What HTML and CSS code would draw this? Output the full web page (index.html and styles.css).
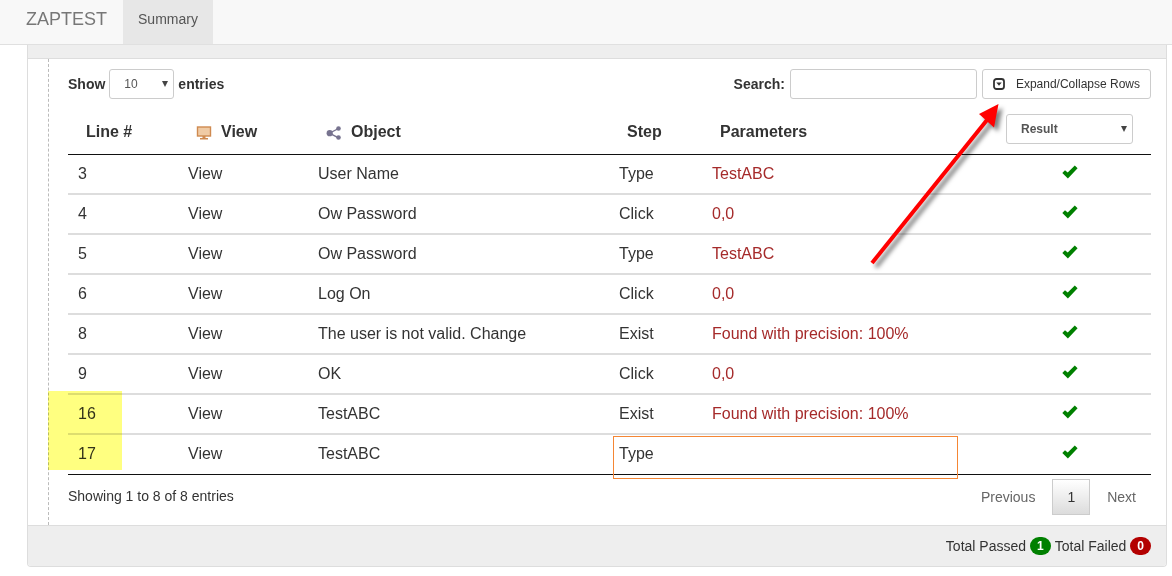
FILE: index.html
```html
<!DOCTYPE html>
<html lang="en">

<head>
    <meta charset="UTF-8">
    <meta name="viewport" content="width=device-width, initial-scale=1.0">
    <title>ZAPTEST</title>
    <link rel="stylesheet" href="styles.css">
</head>

<body>

    <!-- Icons -->
    <svg class="icon-defs" width="0" height="0">
        <symbol id="icon-check" viewBox="0 0 16 14">
            <path d="M0.3 8 L3 5.2 L5.7 7.6 L12.8 0.6 L15.6 3.3 L5.9 13.4 Z" fill="#008000" />
        </symbol>
    </svg>

    <!-- Navbar -->
    <nav class="navbar">
        <a class="brand" href="#">ZAPTEST</a>
        <a class="nav-link active" href="#">Summary</a>
    </nav>

    <div class="panel">
        <div class="panel-heading"></div>
        <div class="panel-body">
            <div class="steps">

                <div class="toolbar">
                    <div class="toolbar-group length-group">
                        <label for="pageLength">Show</label>
                        <span class="select-box length-box">
                            <select id="pageLength">
                                <option>10</option>
                                <option>25</option>
                                <option>50</option>
                            </select>
                        </span>
                        <label for="pageLength">entries</label>
                    </div>
                    <div class="toolbar-group">
                        <label for="search">Search:</label>
                        <input type="text" id="search" class="search">
                        <button type="button" class="btn">
                            <svg width="12" height="12" viewBox="0 0 12 12">
                                <rect x="1" y="1" width="10" height="10" rx="2.5" fill="none" stroke="#333" stroke-width="1.8" />
                                <path d="M3.3 4.5 H8.7 L6 7.8 Z" fill="#333" />
                            </svg>
                            Expand/Collapse Rows
                        </button>
                    </div>
                </div>

                <div class="table-wrap">
                    <table>
                        <colgroup>
                            <col class="col-line">
                            <col class="col-view">
                            <col class="col-object">
                            <col class="col-step">
                            <col class="col-params">
                            <col class="col-result">
                        </colgroup>
                        <thead>
                            <tr>
                                <th>Line #</th>
                                <th>
                                    <span class="th-label">
                                        <svg width="16" height="16" viewBox="0 0 16 16">
                                            <rect x="1.5" y="3" width="13" height="9" fill="#f0cba5" stroke="#cf8a50" stroke-width="1.4" />
                                            <path d="M6.5 12 H9.5 V14 H12 V15.4 H4 V14 H6.5 Z" fill="#cf8a50" />
                                        </svg>
                                        View
                                    </span>
                                </th>
                                <th>
                                    <span class="th-label">
                                        <svg width="16" height="16" viewBox="0 0 16 16">
                                            <path d="M12.500 4.500 L3.500 9.200 L12.500 13.800" fill="none" stroke="#77738f" stroke-width="1.4" />
                                            <circle cx="3.700" cy="9.200" r="3.100" fill="#77738f" />
                                            <circle cx="12.500" cy="4.500" r="2.300" fill="#77738f" />
                                            <circle cx="12.500" cy="13.500" r="2.300" fill="#77738f" />
                                        </svg>
                                        Object
                                    </span>
                                </th>
                                <th>Step</th>
                                <th>Parameters</th>
                                <th>
                                    <span class="select-box">
                                        <select id="result" aria-label="Result">
                                            <option>Result</option>
                                            <option>Passed</option>
                                            <option>Failed</option>
                                        </select>
                                    </span>
                                </th>
                            </tr>
                        </thead>
                        <tbody>
                            <tr>
                                <td>3</td>
                                <td>View</td>
                                <td>User Name</td>
                                <td>Type</td>
                                <td class="param">TestABC</td>
                                <td class="result"><svg width="16" height="14"><use href="#icon-check" /></svg></td>
                            </tr>
                            <tr>
                                <td>4</td>
                                <td>View</td>
                                <td>Ow Password</td>
                                <td>Click</td>
                                <td class="param">0,0</td>
                                <td class="result"><svg width="16" height="14"><use href="#icon-check" /></svg></td>
                            </tr>
                            <tr>
                                <td>5</td>
                                <td>View</td>
                                <td>Ow Password</td>
                                <td>Type</td>
                                <td class="param">TestABC</td>
                                <td class="result"><svg width="16" height="14"><use href="#icon-check" /></svg></td>
                            </tr>
                            <tr>
                                <td>6</td>
                                <td>View</td>
                                <td>Log On</td>
                                <td>Click</td>
                                <td class="param">0,0</td>
                                <td class="result"><svg width="16" height="14"><use href="#icon-check" /></svg></td>
                            </tr>
                            <tr>
                                <td>8</td>
                                <td>View</td>
                                <td>The user is not valid. Change</td>
                                <td>Exist</td>
                                <td class="param">Found with precision: 100%</td>
                                <td class="result"><svg width="16" height="14"><use href="#icon-check" /></svg></td>
                            </tr>
                            <tr>
                                <td>9</td>
                                <td>View</td>
                                <td>OK</td>
                                <td>Click</td>
                                <td class="param">0,0</td>
                                <td class="result"><svg width="16" height="14"><use href="#icon-check" /></svg></td>
                            </tr>
                            <tr>
                                <td>16</td>
                                <td>View</td>
                                <td>TestABC</td>
                                <td>Exist</td>
                                <td class="param">Found with precision: 100%</td>
                                <td class="result"><svg width="16" height="14"><use href="#icon-check" /></svg></td>
                            </tr>
                            <tr>
                                <td>17</td>
                                <td>View</td>
                                <td>TestABC</td>
                                <td>Type</td>
                                <td class="param"></td>
                                <td class="result"><svg width="16" height="14"><use href="#icon-check" /></svg></td>
                            </tr>
                        </tbody>
                    </table>

                    <!-- Annotations over the table -->
                    <div class="highlight"></div>
                    <div class="outline"></div>
                    <svg class="arrow" width="150" height="180" viewBox="0 0 150 180">
                        <path d="M10 166 L125 23" stroke="#ff0000" stroke-width="4" />
                        <path d="M136.5 7 L117 17 L132 30.5 Z" fill="#ff0000" />
                    </svg>
                </div>

                <div class="table-footer">
                    <div class="info">Showing 1 to 8 of 8 entries</div>
                    <div class="pagination">
                        <a href="#">Previous</a>
                        <a href="#" class="current">1</a>
                        <a href="#">Next</a>
                    </div>
                </div>

            </div>
        </div>
        <div class="panel-footer">
            Total Passed <span class="badge passed">1</span>
            Total Failed <span class="badge failed">0</span>
        </div>
    </div>

</body>

</html>
```
FILE: styles.css
```css
* {
    box-sizing: border-box;
}

body {
    margin: 0;
    font-family: "Liberation Sans", Arial, sans-serif;
    font-size: 14px;
    line-height: 20px;
    color: #333;
    background: #fff;
}

a {
    text-decoration: none;
}

svg {
    flex: none;
}

.icon-defs {
    position: absolute;
}

/* Navbar */
.navbar {
    display: flex;
    height: 45px;
    padding-left: 10px;
    background: #f8f8f8;
    border-bottom: 1px solid #e0e0e0;
}

.brand {
    padding: 9px 16px;
    font-size: 18px;
    color: #777;
}

.nav-link {
    padding: 9px 15px;
    color: #555;
}

.nav-link.active {
    background: #e7e7e7;
}

/* Panel */
.panel {
    margin: 0 5px 0 27px;
    border: 1px solid #ddd;
    border-top: none;
    border-radius: 0 0 4px 4px;
}

.panel-heading {
    height: 14px;
    background: #eee;
    border-bottom: 1px solid #ddd;
}

.panel-body {
    padding-left: 20px;
}

.steps {
    padding: 10px 15px 10px 19px;
    border-left: 1px dashed #bbb;
}

.panel-footer {
    display: flex;
    align-items: center;
    justify-content: flex-end;
    gap: 4px;
    height: 41px;
    padding: 0 15px;
    background: #eee;
    border-top: 1px solid #ddd;
    border-radius: 0 0 3px 3px;
}

.badge {
    padding: 3px 7px;
    border-radius: 10px;
    font-size: 12px;
    font-weight: bold;
    line-height: 12px;
    color: #fff;
}

.badge.passed {
    background: #008000;
}

.badge.failed {
    background: #b30000;
}

/* Toolbar */
.toolbar {
    display: flex;
    justify-content: space-between;
}

.toolbar-group {
    display: flex;
    align-items: center;
    gap: 5px;
}

.toolbar .length-group {
    gap: 4px;
}

.toolbar label {
    font-weight: bold;
}

.select-box {
    position: relative;
    display: block;
}

.select-box::after {
    content: "";
    position: absolute;
    top: 12px;
    right: 6px;
    border: 3px solid transparent;
    border-top: 6px solid #444;
    border-bottom: none;
    pointer-events: none;
}

select,
.search,
.btn {
    height: 30px;
    border: 1px solid #ccc;
    border-radius: 3px;
    background: #fff;
    font-family: inherit;
    font-size: 12px;
    color: #333;
}

select {
    display: block;
    width: 100%;
    padding: 0 14px;
    appearance: none;
    color: #555;
}

.length-box {
    width: 65px;
}

.search {
    width: 187px;
    padding: 5px 10px;
}

.btn {
    display: flex;
    align-items: center;
    gap: 11px;
    padding: 0 10px;
}

/* Table */
.table-wrap {
    position: relative;
    margin-top: 5px;
}

table {
    width: 100%;
    table-layout: fixed;
    border-collapse: separate;
    border-spacing: 0;
    border-bottom: 1px solid #111;
    font-size: 16px;
}

.col-line {
    width: 110px;
}

.col-view {
    width: 130px;
}

.col-step {
    width: 93px;
}

.col-params {
    width: 286px;
}

.col-result {
    width: 163px;
}

th {
    padding: 10px 18px;
    border-bottom: 1px solid #111;
    line-height: 24px;
    text-align: left;
    vertical-align: bottom;
}

td {
    height: 40px;
    padding: 0 10px;
    border-bottom: 2px solid #ddd;
}

tbody tr:last-child td {
    height: 39px;
    padding-bottom: 1px;
    border-bottom: none;
}

th select {
    font-weight: bold;
}

.th-label {
    display: flex;
    align-items: center;
    gap: 9px;
}

.param {
    color: #a52a2a;
}

.result {
    text-align: center;
}

/* Annotations */
.highlight {
    position: absolute;
    left: -20px;
    bottom: 5px;
    width: 74px;
    height: 79px;
    background: #ffff80;
    mix-blend-mode: multiply;
}

.outline {
    position: absolute;
    right: 193px;
    bottom: -4px;
    width: 345px;
    height: 43px;
    border: 1px solid #f58634;
}

.arrow {
    position: absolute;
    top: -7px;
    right: 139px;
    filter: drop-shadow(4px 4px 2px rgba(0, 0, 0, 0.5));
    pointer-events: none;
}

/* Info and pagination */
.table-footer {
    display: flex;
    justify-content: space-between;
    padding-top: 4px;
}

.info {
    padding-top: 7px;
}

.pagination {
    display: flex;
    gap: 2px;
}

.pagination a {
    padding: 7px 14px;
    border: 1px solid transparent;
    color: #666;
}

.pagination .current {
    border-color: #ccc;
    background: linear-gradient(#fff, #dcdcdc);
    color: #333;
}
```
